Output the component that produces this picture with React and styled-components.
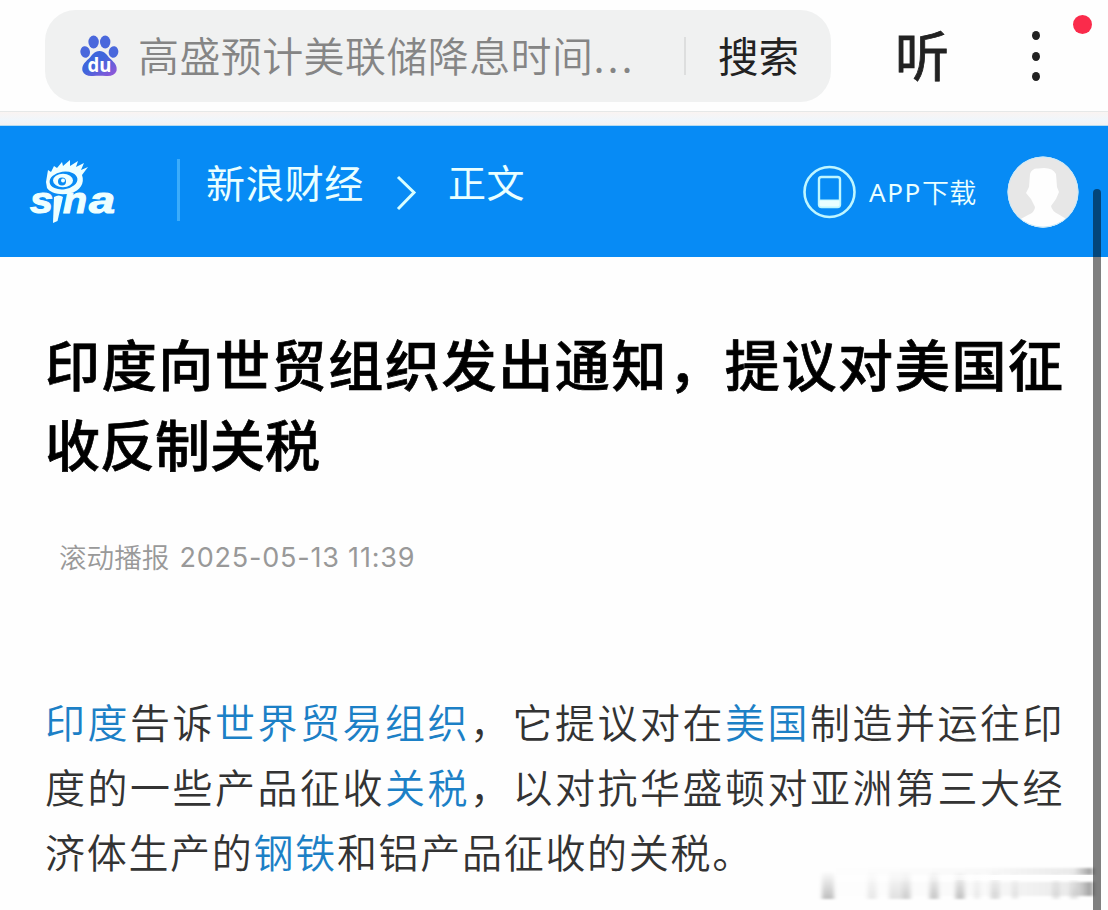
import React from 'react';
import styled, { createGlobalStyle } from 'styled-components';

const Global = createGlobalStyle`
  * { box-sizing: border-box; }
  body { margin: 0; background: #fefefe; font-family: "Noto Sans CJK SC", sans-serif; }
`;
const Page = styled.div`
  position: relative; width: 1108px; height: 910px; overflow: hidden;
  display: flex; flex-direction: column; background: #fefefe;
`;
const TopBar = styled.header`
  height: 111px; padding: 10px 0 0 45px; display: flex; align-items: flex-start; background: #fefefe;
`;
const SearchBox = styled.div`
  width: 786px; height: 92px; border-radius: 31px; background: #f0f1f1;
  display: flex; align-items: center; padding-left: 34px;
`;
const Query = styled.span`
  width: 546px; margin: -5px 0 0 18px; font-size: 41px; line-height: 60px; letter-spacing: 0.4px;
  font-weight: 350; color: #858585; white-space: nowrap;
`;
const Ellipsis = styled.span`
  letter-spacing: 3px;
`;
const Divider = styled.span`
  flex: none; width: ${p => p.$w}px; height: ${p => p.$h}px; background: ${p => p.$color};
`;
const SearchButton = styled.span`
  margin: -2px 0 0 32px; font-size: 40.5px; line-height: 60px; color: #222; white-space: nowrap;
`;
const Listen = styled.span`
  margin: 4px 0 0 64px; width: 56px; font-size: 54px; line-height: 80px; color: #222;
  -webkit-text-stroke: 0.8px #222;
`;
const Menu = styled.div`
  margin: 21px 0 0 81px; height: 50px; width: 9px; display: flex; flex-direction: column; justify-content: space-between;
`;
const MenuDot = styled.span`
  width: 8px; height: 9px; border-radius: 50%; background: #222;
`;
const Badge = styled.span`
  position: absolute; left: 1073px; top: 15px; width: 19px; height: 19px; border-radius: 50%; background: #fa2b4b;
`;
const Strip = styled.div`
  height: 15px; border-top: 1px solid #e6e8e8; border-bottom: 1px solid #b4dcf2;
  background: linear-gradient(#faf4f2, #f0f6fb 60%, #f5f2f1);
`;
const Nav = styled.nav`
  height: 131px; display: flex; align-items: flex-start; background: #078bf5; padding-left: 28px; color: #eaffff;
`;
const LogoSlot = styled.div`
  flex: none; width: 149px; height: 70px; margin-top: 33px;
`;
const RuleSlot = styled.div`
  flex: none; width: 29px; padding-top: 33px; display: flex;
`;
const Crumb = styled.span`
  flex: none; width: ${p => p.$w}px; margin-top: 26px; font-size: ${p => p.$size}px; line-height: 58px; letter-spacing: ${p => p.$gap}px; white-space: nowrap;
`;
const ChevronSlot = styled.div`
  flex: none; width: 52px; margin-top: 49px; display: flex;
`;
const Download = styled.div`
  flex: none; display: flex; align-items: center; gap: 13px; width: 204px; margin: 39px 0 0 275px; height: 54px;
`;
const DownloadLabel = styled.span`
  display: flex; align-items: center; font-size: 27px; line-height: 40px; font-weight: 350; white-space: nowrap; letter-spacing: 0.4px;
`;
const Latin = styled.span`
  font-size: ${p => p.$size}px; letter-spacing: ${p => p.$gap}px; font-family: ${p => p.$font}; font-weight: 400;
`;
const Avatar = styled.div`
  flex: none; width: 72px; height: 72px; margin-top: 30px;
`;
const Article = styled.main`
  padding: 65px 0 0 45px; display: flex; flex-direction: column;
`;
const Title = styled.h1`
  margin: 0; font-size: 55px; font-weight: 500; line-height: 80px; color: #000;
  -webkit-text-stroke: 0.7px #000;
`;
const Line = styled.span`
  display: block; white-space: nowrap; letter-spacing: ${p => p.$gap}px;
`;
const Meta = styled.div`
  display: flex; align-items: center; height: 40px; margin: 54px 0 0 14px; color: #999; font-size: 27.6px;
  font-weight: 350; white-space: nowrap; gap: 10px;
`;
const Timestamp = styled(Latin)`
  padding-top: 2px;
`;
const Body = styled.p`
  margin: 113px 0 0; font-size: 40px; line-height: 65px; color: #333; font-weight: 350;
`;
const Term = styled.a`
  color: #1c80c6;
`;
const ScrollThumb = styled.div`
  position: absolute; left: 1093px; top: 189px; width: 8px; height: 740px; border-radius: 4px; background: rgba(0,0,0,.5);
`;
const Smudge = styled.svg`
  position: absolute; left: 800px; top: 855px;
`;

const Paw = () => (
  <svg width="41" height="42" viewBox="0 0 41 42">
    <defs>
      <linearGradient id="paw" x1="0" y1="0" x2="1" y2="1">
        <stop offset="0.45" stopColor="#3f66dc" /><stop offset="1" stopColor="#9b55d8" />
      </linearGradient>
    </defs>
    <g fill="#4a68dc">
      <ellipse cx="14.6" cy="7" rx="5.2" ry="6.4" />
      <ellipse cx="26.200" cy="7" rx="5.2" ry="6.4" />
      <ellipse cx="6.2" cy="17" rx="4.800" ry="5.8" transform="rotate(-12 6.2 17)" />
      <ellipse cx="34.5" cy="17" rx="4.800" ry="5.8" transform="rotate(12 34.5 17)" />
    </g>
    <path d="M20.5 16C26 16 27.5 20 31 23.500C36 28 38.500 31 37.500 36C36 40 32 41.5 27 41C22 40.5 19 40.5 14 41C9 41.5 5 40 3.500 36C2.500 31 5 28 10 23.500C13.500 20 15 16 20.500 16Z" fill="url(#paw)" />
    <text x="8.5" y="37" textLength="24" lengthAdjust="spacingAndGlyphs" fontFamily="Open Sans, sans-serif" fontWeight="700" fontSize="20" fill="#fff">du</text>
  </svg>
);

const SinaLogo = () => (
  <svg width="92" height="68" viewBox="0 0 92 68">
    <g fill="#eeffff">
      <path d="M18 23L20 11L23 13L26 7L29 9L34 3L35 7L42 1L42 7L50 2L48 8L56 4L53 11L60 8L54 16C57 24 52 32 43 34C33 37 22 34 19 29Z" />
      <ellipse cx="35.500" cy="21.500" rx="14" ry="8.800" fill="#078bf5" transform="rotate(-8 35.500 21.500)" />
      <ellipse cx="35" cy="21.500" rx="10" ry="6.800" />
      <circle cx="34" cy="22.500" r="4" fill="#078bf5" />
      <circle cx="35" cy="21.500" r="2" />
      <g stroke="#eeffff" strokeWidth="1.1" fontFamily="Liberation Sans, sans-serif" fontStyle="italic" fontWeight="700" fontSize="36">
        <text x="2" y="54" textLength="23" lengthAdjust="spacingAndGlyphs">s</text>
        <text x="35" y="54" textLength="24" lengthAdjust="spacingAndGlyphs">n</text>
        <text x="61" y="54" textLength="26" lengthAdjust="spacingAndGlyphs">a</text>
      </g>
      <path d="M26 38Q31 35 35 38L29.500 62L25 64Z" />
    </g>
  </svg>
);

const PhoneIcon = () => (
  <svg width="53" height="54" viewBox="0 0 53 54" fill="none" stroke="#bff6ff">
    <circle cx="26.500" cy="27" r="25" strokeWidth="2.600" />
    <rect x="16" y="12" width="21" height="30" rx="2.500" strokeWidth="2.400" />
    <path d="M16 35H37V40Q37 42 35 42H18Q16 42 16 40Z" fill="#eaffff" />
  </svg>
);

const Person = () => (
  <svg width="72" height="72" viewBox="0 0 72 72">
    <defs><clipPath id="face"><circle cx="36" cy="36" r="35.500" /></clipPath></defs>
    <g clipPath="url(#face)">
      <rect width="72" height="72" fill="#e7e7e7" />
      <path d="M23 18Q25 12 31 12.500Q45 10 49 18L50 31L52 36L49 43L44 50Q45 55 51 58L61 64V74H10V65L21 59Q28 56 28 51L24 43L19 37L22 31Z" fill="#fefefe" />
    </g>
    <circle cx="36" cy="36" r="35" fill="none" stroke="#c9eafa" strokeWidth="1" />
  </svg>
);

const bars = [[31, 12, .3], [75, 9, .1], [98, 12, .13], [109, 9, .22], [137, 9, .25], [163, 9, .28], [180, 6, .08], [198, 9, .16], [218, 6, .1], [259, 7, .12], [277, 8, .12]];
const BottomSmudge = () => (
  <Smudge width="300" height="55" viewBox="0 0 300 55">
    <defs>
      <filter id="soft" x="-5%" y="-20%" width="110%" height="140%" colorInterpolationFilters="sRGB"><feGaussianBlur stdDeviation="2 1" /></filter>
      <linearGradient id="fade" x1="0" x2="0" y1="0" y2="1"><stop offset="0" stopOpacity="0" /><stop offset="1" stopOpacity=".85" /></linearGradient>
      <linearGradient id="edge" x1="0" x2="1" y1="0" y2="0"><stop offset="0" stopOpacity="0" /><stop offset=".6" stopOpacity=".02" /><stop offset=".93" stopOpacity=".08" /><stop offset="1" stopOpacity=".4" /></linearGradient>
      <linearGradient id="gap" x1="0" x2="1" y1="0" y2="0"><stop offset="0" stopColor="#fff" stopOpacity="0" /><stop offset=".4" stopColor="#fff" /></linearGradient>
    </defs>
    <rect x="20" y="13" width="273" height="7" fill="url(#edge)" filter="url(#soft)" />
    <rect x="20" y="27" width="273" height="14" fill="url(#edge)" filter="url(#soft)" />
    <g filter="url(#soft)">
      {bars.map(([x, w, o]) => <rect key={x} x={x - w / 2 - 3} y="16" width={w} height="28" fill="url(#fade)" opacity={o} />)}
    </g>
    <rect x="130" y="20" width="165" height="5" fill="url(#gap)" />
  </Smudge>
);

export default function App() {
  return (
    <Page>
      <Global />
      <TopBar>
        <SearchBox>
          <Paw />
          <Query>高盛预计美联储降息时间<Ellipsis>...</Ellipsis></Query>
          <Divider $w={2} $h={38} $color="#dddede" />
          <SearchButton>搜索</SearchButton>
        </SearchBox>
        <Listen>听</Listen>
        <Menu><MenuDot /><MenuDot /><MenuDot /></Menu>
        <Badge />
      </TopBar>
      <Strip />
      <Nav>
        <LogoSlot><SinaLogo /></LogoSlot>
        <RuleSlot><Divider $w={3} $h={62} $color="#3bacfb" /></RuleSlot>
        <Crumb $w={190} $size={39} $gap={0.4}>新浪财经</Crumb>
        <ChevronSlot>
          <svg width="22" height="36" viewBox="0 0 22 36" fill="none" stroke="#d8ffff" strokeWidth="3"><path d="M2 2L18 17.500L2 34" /></svg>
        </ChevronSlot>
        <Crumb $w={80} $size={38} $gap={0.5}>正文</Crumb>
        <Download>
          <PhoneIcon />
          <DownloadLabel><Latin $size={26} $gap={1.6} $font='"Noto Sans", sans-serif'>APP</Latin>下载</DownloadLabel>
        </Download>
        <Avatar><Person /></Avatar>
      </Nav>
      <Article>
        <Title>
          <Line $gap={1.65}>印度向世贸组织发出通知，提议对美国征</Line>
          <Line $gap={0}>收反制关税</Line>
        </Title>
        <Meta>
          <span>滚动播报</span>
          <Timestamp $size={27} $gap={0.8} $font="Inter, sans-serif">2025-05-13 11:39</Timestamp>
        </Meta>
        <Body>
          <Line $gap={2.5}><Term>印度</Term>告诉<Term>世界贸易组织</Term>，它提议对在<Term>美国</Term>制造并运往印</Line>
          <Line $gap={2.5}>度的一些产品征收<Term>关税</Term>，以对抗华盛顿对亚洲第三大经</Line>
          <Line $gap={1.7}>济体生产的<Term>钢铁</Term>和铝产品征收的关税。</Line>
        </Body>
      </Article>
      <BottomSmudge />
      <ScrollThumb />
    </Page>
  );
}
